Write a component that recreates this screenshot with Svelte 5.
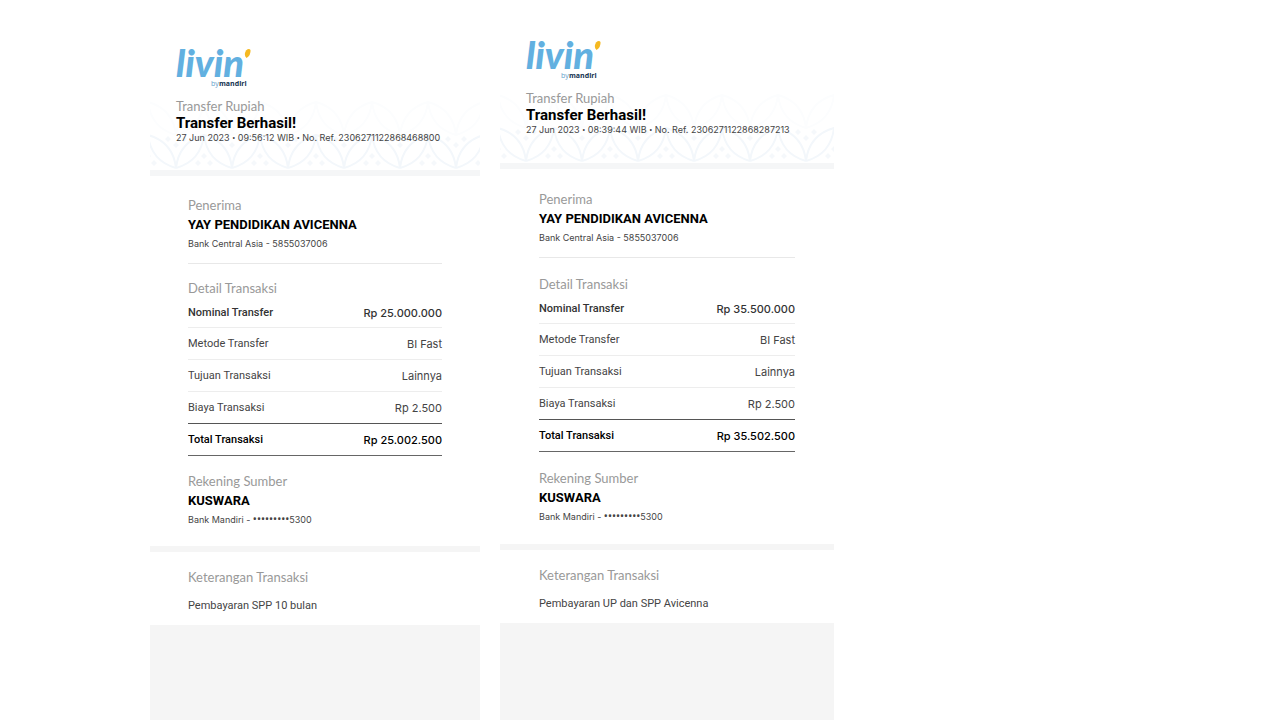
<script>
  const receipts = [
    {
      id: 'a',
      meta: ['27 Jun 2023', '09:56:12 WIB', 'No. Ref. 2306271122868468800'],
      rows: [
        ['Nominal Transfer', 'Rp 25.000.000'],
        ['Metode Transfer', 'BI Fast'],
        ['Tujuan Transaksi', 'Lainnya'],
        ['Biaya Transaksi', 'Rp 2.500'],
        ['Total Transaksi', 'Rp 25.002.500']
      ],
      note: 'Pembayaran SPP 10 bulan'
    },
    {
      id: 'b',
      meta: ['27 Jun 2023', '08:39:44 WIB', 'No. Ref. 2306271122868287213'],
      rows: [
        ['Nominal Transfer', 'Rp 35.500.000'],
        ['Metode Transfer', 'BI Fast'],
        ['Tujuan Transaksi', 'Lainnya'],
        ['Biaya Transaksi', 'Rp 2.500'],
        ['Total Transaksi', 'Rp 35.502.500']
      ],
      note: 'Pembayaran UP dan SPP Avicenna'
    }
  ];
</script>

<main>
  {#each receipts as r (r.id)}
    <article class="receipt {r.id}">
      <header>
        <svg class="pattern" aria-hidden="true">
          <defs>
            <pattern id="lace-{r.id}" x="-30" width="56" height="70" patternUnits="userSpaceOnUse">
              <g fill="none" stroke="#f3f7fb" stroke-width="2">
                <path d="M0 68Q3 42 28 35Q53 42 56 68" />
                <path d="M0 68Q25 61 28 35Q31 61 56 68" />
                <path d="M0 35Q3 9 28 2Q53 9 56 35M0 35Q25 28 28 2Q31 28 56 35" stroke="#fcfdfe" />
              </g>
              <path d="M28 53l3 3-3 3-3-3zM22 60l3 3-3 3-3-3zM34 60l3 3-3 3-3-3zM0 42l3 3-3 3-3-3zM56 42l3 3-3 3-3-3zM8 36l3 3-3 3-3-3zM48 36l3 3-3 3-3-3z" fill="#f5f8fb" />
            </pattern>
          </defs>
          <rect width="100%" height="70" fill="url(#lace-{r.id})" />
        </svg>
        <svg class="logo" viewBox="0 0 78 48" role="img" aria-label="livin' by mandiri">
          <text class="mark" x="0" y="35">livin</text>
          <path d="M70 8.500Q73 6 74.500 8Q75 13 70.500 16Q67.500 13 70 8.500z" fill="#f5b921" />
          <text class="by" x="35" y="44">by</text>
          <text class="bank" x="43" y="44">mandiri</text>
        </svg>
        <p class="label">Transfer Rupiah</p>
        <h1>Transfer Berhasil!</h1>
        <p class="small">{r.meta[0]} <span class="dot">•</span> {r.meta[1]} <span class="dot">•</span> {r.meta[2]}</p>
      </header>
      <div class="body">
        <section class="to">
          <h2 class="label">Penerima</h2>
          <p class="name">YAY PENDIDIKAN AVICENNA</p>
          <p class="small">Bank Central Asia - 5855037006</p>
        </section>
        <section class="detail">
          <h2 class="label">Detail Transaksi</h2>
          <table>
            <tbody>
              {#each r.rows as [k, v]}
                <tr><th scope="row">{k}</th><td>{v}</td></tr>
              {/each}
            </tbody>
          </table>
        </section>
        <section class="from">
          <h2 class="label">Rekening Sumber</h2>
          <p class="name">KUSWARA</p>
          <p class="small">Bank Mandiri - <span class="mask">•••••••••</span>5300</p>
        </section>
      </div>
      <section class="note">
        <h2 class="label">Keterangan Transaksi</h2>
        <p>{r.note}</p>
      </section>
      <div class="rest"></div>
    </article>
  {/each}
</main>

<style>
  :global(body) { background: #fff; }
  main {
    display: grid;
    grid-template-columns: 150fr 330fr 20fr 334fr 446fr;
    min-height: 100vh;
    font-family: Inter, Roboto, sans-serif;
    color: #444;
  }
  h1, h2, p { margin: 0; font-weight: 400; white-space: nowrap; }
  .receipt { display: flex; flex-direction: column; min-width: 0; }
  .a { grid-column: 2; --top: 42px; --side: 38px; --lead: 19px; --gap: 14px; --from: 15px; --end: 17px; }
  .b { grid-column: 4; --top: 34px; --side: 39px; --lead: 20px; --gap: 16px; --from: 16px; --end: 18px; }
  header {
    position: relative;
    padding: var(--top) 0 25px 26px;
    border-bottom: 6px solid #f5f6f7;
  }
  .b header { padding-bottom: 26px; }
  .pattern { position: absolute; left: 0; bottom: 0; width: 100%; height: 70px; }
  .logo { position: relative; display: block; width: 78px; height: 48px; margin-bottom: 7px; overflow: visible; }
  .mark { font: italic 900 38px Lato, sans-serif; fill: #62b0e0; }
  .by { font: 7px "Open Sans", sans-serif; fill: #62a0cc; }
  .bank { font: 700 7px "Open Sans", sans-serif; fill: #12304f; }
  header p, h1 { position: relative; }
  .label { font-family: Lato, sans-serif; font-size: 13px; line-height: 20px; color: #999; }
  header .label { line-height: 18px; }
  h1 { font-family: Roboto, sans-serif; font-size: 15px; line-height: 16px; font-weight: 700; color: #000; }
  .small { font-size: 9px; line-height: 18px; }
  header .small { line-height: 14px; }
  .dot { font-family: Roboto, sans-serif; line-height: 1; }
  .mask { font-family: Roboto, sans-serif; font-size: 12px; line-height: 1; }
  .name { font-family: Roboto, sans-serif; font-size: 13px; line-height: 20px; font-weight: 700; color: #000; }
  .body { padding: var(--lead) var(--side) var(--end); border-bottom: 6px solid #f5f5f5; }
  .to { padding-bottom: 10px; border-bottom: 1px solid #e8e8e8; }
  .detail { padding-top: var(--gap); }
  .from { padding-top: var(--from); }
  table { width: 100%; border-collapse: separate; border-spacing: 0; font-size: 11px; line-height: 16px; }
  th, td { height: 32px; box-sizing: border-box; padding: 1px 0 0; border-bottom: 1px solid #ededed; font-weight: 400; text-align: left; }
  th { font-family: Roboto, sans-serif; }
  td { text-align: right; }
  tr:first-child > * { height: 30px; color: #333; font-weight: 500; }
  tr:nth-child(4) > * { border-bottom: 1px solid #555; }
  tr:last-child > * { border-bottom: 1px solid #666; color: #000; font-weight: 500; }
  .note { padding: 15px var(--side) 9px; }
  .note p { margin-top: 9px; font-family: Roboto, sans-serif; font-size: 11px; line-height: 20px; }
  .rest { flex: 1; min-height: 40px; background: #f5f5f5; }
</style>
